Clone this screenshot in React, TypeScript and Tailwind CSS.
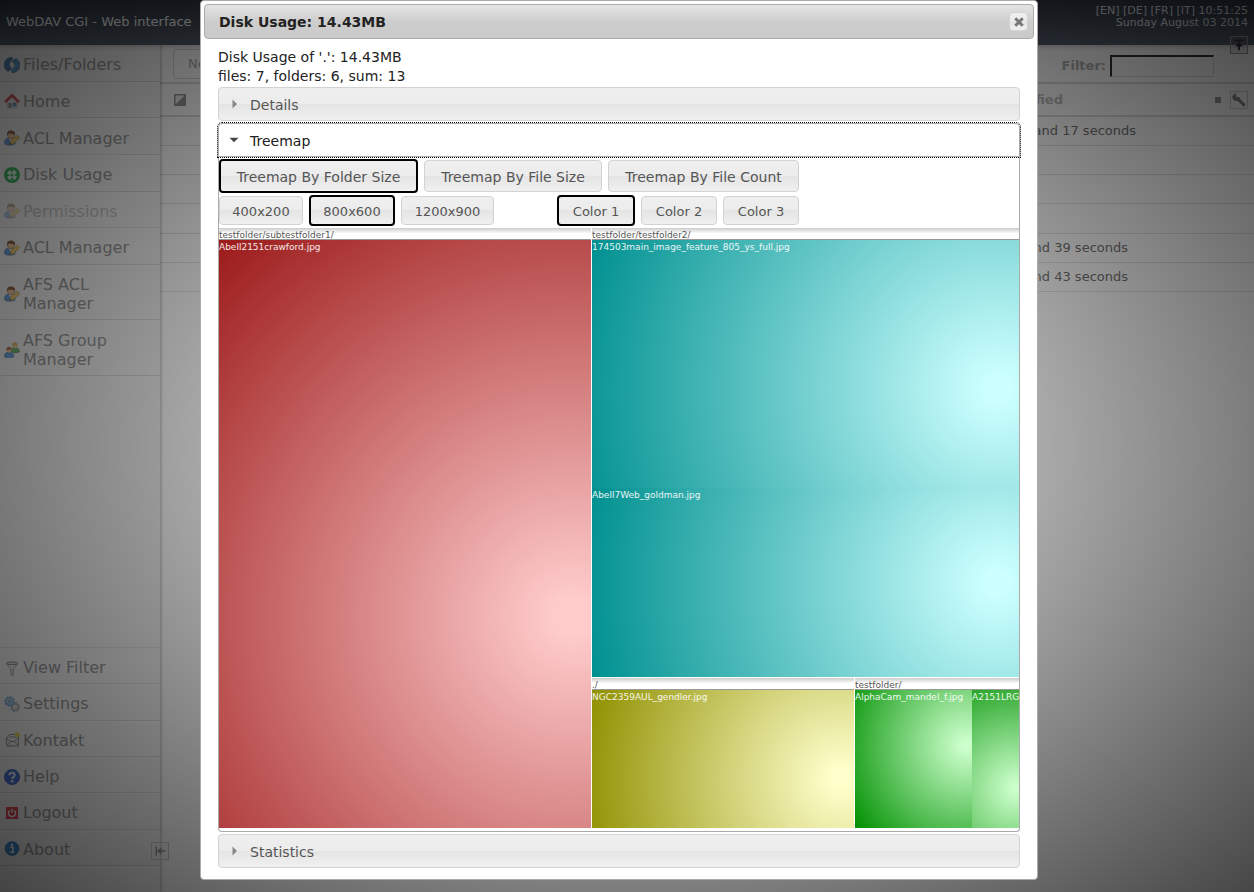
import type { ReactNode } from 'react';

function Svg({ children, className = 'size-4' }: { children: ReactNode; className?: string }) {
  return (
    <svg viewBox="0 0 16 16" className={`${className} shrink-0`} aria-hidden="true">
      {children}
    </svg>
  );
}

const FilesIcon = () => (
  <Svg>
    <path d="M8 .4C3.500.4.300 3.600.300 7.600c0 3 1.400 5.500 3.700 6.900L8 11.500C5.600 10 5 8 6.200 5.800L8.800 2.500z" fill="#3d78b4" stroke="#2b5a8c" strokeWidth=".7" />
    <path d="M8 15.600c4.500 0 7.700-3.200 7.700-7.200 0-3-1.400-5.500-3.700-6.900L8 4.500c2.400 1.500 3 3.500 1.800 5.700l-2.600 3.300z" fill="#4f92cc" stroke="#2b5a8c" strokeWidth=".7" />
    <path d="M10.500 1.200L6.500 5.500c-1.200 2.600.2 3.900 1.700 5.400" fill="none" stroke="#d4e2ee" strokeWidth=".8" />
    <path d="M5.500 14.800l4.200-4.300c1.200-2.600-.2-3.900-1.700-5.400" fill="none" stroke="#d4e2ee" strokeWidth=".8" />
  </Svg>
);

const HomeIcon = () => (
  <Svg>
    <path d="M3 8l5-5 5 5v7H3z" fill="#ececec" stroke="#aaa" strokeWidth=".6" />
    <path d="M8 .8L.4 8.200l1.600 1.500L8 4l6 5.700 1.600-1.500z" fill="#e0484c" stroke="#b02a30" strokeWidth=".6" />
    <path d="M4.500 10h3v5h-3z" fill="#8a8a8a" />
    <path d="M9 10h3v3H9z" fill="#6c9cd4" stroke="#567" strokeWidth=".5" />
  </Svg>
);

const UserEditIcon = () => (
  <Svg>
    <path d="M.8 14c-.8-4 1.200-6 4.700-6s6 2 5.500 6c-3 1.600-7.200 1.600-10.200 0z" fill="#5b9be0" stroke="#3568a8" strokeWidth=".6" />
    <path d="M4.500 8.500L7 12l2.500-3.500z" fill="#f4f4f4" />
    <circle cx="7" cy="5.200" r="3.500" fill="#f2c69a" stroke="#a06a38" strokeWidth=".5" />
    <path d="M3 5.800C2.500 1.500 4.800.4 7 .4c2.700 0 4.600 1.500 4 4.800C9.500 3.500 7.500 4 5.500 3.500 4.500 3.700 3.800 4.700 3 5.800z" fill="#84502c" />
    <path d="M5.500 14.500l1.200-3.600 6.600-5.600 2.400 2.400-6.200 6z" fill="#f5cf64" stroke="#b0852c" strokeWidth=".6" />
    <path d="M5.500 14.500l.6-1.900 1.300 1.300z" fill="#555" />
  </Svg>
);

const DiskIcon = () => (
  <Svg>
    <circle cx="8" cy="8" r="8" fill="#23b14d" />
    <circle cx="8" cy="8" r="5.200" fill="#e5f5e8" />
    <circle cx="8" cy="8" r="1.500" fill="#23b14d" />
    <path d="M8 6L6 3h3zM10 8l3-2v3.500zM8 10l2 3H6.500zM6 8l-3 2V6.500z" fill="#23b14d" />
  </Svg>
);

const GroupIcon = () => (
  <Svg>
    <path d="M7 9.500c0-3 1.500-4 4-4s4.500 1.500 4.300 4.500c-2 1.200-6 1.200-8.300-.5z" fill="#5fb45f" stroke="#3c843c" strokeWidth=".6" />
    <circle cx="10.700" cy="3.500" r="2.600" fill="#f2c69a" />
    <path d="M8 3.500C8 1 9.500.3 10.800.3S13.800 1 13.500 4c-1-1.500-3.500-1-5.500-.5z" fill="#d9b04a" />
    <path d="M.5 15c-.3-3.500 1.500-5 4.500-5s5 1.500 4.700 5c-2.500 1-6.500 1-9.200 0z" fill="#5b9be0" stroke="#3568a8" strokeWidth=".6" />
    <circle cx="5" cy="8" r="2.700" fill="#f2c69a" />
    <path d="M2.300 8C2.300 5.500 3.600 4.800 5 4.800s3 .8 2.700 3.700C6.700 7 4.500 7.500 2.300 8z" fill="#a0603c" />
  </Svg>
);

const FunnelIcon = () => (
  <Svg>
    <path d="M2.500 4L7 8.800v5.700l2.300.8V8.800L13.700 4" fill="#efefef" stroke="#9a9a9a" />
    <ellipse cx="8.100" cy="3.300" rx="5.600" ry="1.400" fill="#e0e0e0" stroke="#808080" />
  </Svg>
);

const GearsIcon = () => (
  <Svg>
    <circle cx="11" cy="11" r="3.200" fill="#e2e5e8" stroke="#b4bac0" strokeWidth="2" />
    <circle cx="11" cy="11" r="4.500" fill="none" stroke="#9ba2aa" strokeWidth="1.200" strokeDasharray="1.800 1.700" />
    <circle cx="5.500" cy="5.500" r="3.400" fill="#dbe9f6" stroke="#8dbbe6" strokeWidth="2.400" />
    <circle cx="5.500" cy="5.500" r="4.800" fill="none" stroke="#6a9cd0" strokeWidth="1.200" strokeDasharray="1.900 1.800" />
    <circle cx="5.500" cy="5.500" r="1.500" fill="#6a9cd0" />
  </Svg>
);

const MailIcon = () => (
  <Svg>
    <path d="M2.500 14V6l3-3.500h9V14z" fill="#f2f2f2" stroke="#8c8c8c" />
    <path d="M3 13.500l4-4h3l4 4M3 7l4 3M14 6l-4 4M5 5.500c3-1 5-1 7 0" fill="none" stroke="#8c8c8c" />
    <circle cx="13.300" cy="2.800" r="2.500" fill="#e8dc3c" />
  </Svg>
);

const HelpIcon = () => (
  <Svg>
    <circle cx="8" cy="8" r="7.600" fill="#2f62d8" stroke="#2048a8" strokeWidth=".8" />
    <path d="M5.400 6.200C5.400 2.800 10.800 2.800 10.700 6c-.1 2-2.500 2-2.600 4" fill="none" stroke="#fff" strokeWidth="1.900" />
    <circle cx="8.100" cy="12.200" r="1.200" fill="#fff" />
  </Svg>
);

const LogoutIcon = () => (
  <Svg>
    <path d="M2 2h12v12H2z" fill="#e02838" />
    <path d="M5.600 5.600a3.500 3.500 0 1 0 4.800 0M8 3.800v4" fill="none" stroke="#fff" strokeWidth="1.500" />
  </Svg>
);

const InfoIcon = () => (
  <Svg>
    <circle cx="8" cy="7.600" r="7" fill="#1d7ed0" stroke="#125a9c" strokeWidth=".6" />
    <path d="M6.200 6.300h2.700v4.900M6 11.300h4.300" fill="none" stroke="#fff" strokeWidth="1.500" />
    <circle cx="8" cy="3.800" r="1.200" fill="#fff" />
  </Svg>
);

type NavEntry = { label: string; icon: ReactNode; faded?: boolean };

const topNav: NavEntry[] = [
  { label: 'Files/Folders', icon: <FilesIcon /> },
  { label: 'Home', icon: <HomeIcon /> },
  { label: 'ACL Manager', icon: <UserEditIcon /> },
  { label: 'Disk Usage', icon: <DiskIcon /> },
  { label: 'Permissions', icon: <UserEditIcon />, faded: true },
  { label: 'ACL Manager', icon: <UserEditIcon /> },
  { label: 'AFS ACL Manager', icon: <UserEditIcon /> },
  { label: 'AFS Group Manager', icon: <GroupIcon /> },
];

const bottomNav: NavEntry[] = [
  { label: 'View Filter', icon: <FunnelIcon /> },
  { label: 'Settings', icon: <GearsIcon /> },
  { label: 'Kontakt', icon: <MailIcon /> },
  { label: 'Help', icon: <HelpIcon /> },
  { label: 'Logout', icon: <LogoutIcon /> },
  { label: 'About', icon: <InfoIcon /> },
];

function NavList({ items, className }: { items: NavEntry[]; className: string }) {
  return (
    <ul className={`flex flex-col ${className}`}>
      {items.map((item, i) => (
        <li key={i} className="flex grow border-b border-[#dcdcdc] shadow-[0_1px_0_#fbfbfb]">
          <a
            href="#"
            className={`flex grow items-center gap-[3px] pt-[10px] pr-6 pb-[6px] pl-1 text-base leading-[19px] text-[#9a9a9a] ${
              item.faded ? 'opacity-50' : ''
            }`}
          >
            <span className="opacity-85">{item.icon}</span>
            <span>{item.label}</span>
          </a>
        </li>
      ))}
    </ul>
  );
}

const rows = ['and 17 seconds', '', '', '', 'and 39 seconds', 'and 43 seconds'];

function IconButton({ label, children, className }: { label: string; children: ReactNode; className: string }) {
  return (
    <button
      type="button"
      aria-label={label}
      className={`flex size-[18px] items-center justify-center border border-[#d0d0d0] ${className}`}
    >
      {children}
    </button>
  );
}

function Page() {
  return (
    <div className="flex min-h-screen flex-col bg-white">
      <header className="relative z-10 flex h-[45px] items-start justify-between bg-linear-to-b from-[#303a47] to-[#56606e] px-[6px] shadow-[0_1px_5px_#00000044]">
        <h1 className="pt-[14px] text-[13px] leading-4 text-white">WebDAV CGI - Web interface</h1>
        <div className="pt-[5px] text-right text-[11px] leading-3 text-[#e2e5ea]">
          <div>
            <a href="#">[EN]</a> <a href="#">[DE]</a> <a href="#">[FR]</a> <a href="#">[IT]</a> 10:51:25
          </div>
          <div>Sunday August 03 2014</div>
        </div>
        <button
          type="button"
          aria-label="Collapse header"
          className="absolute right-[6px] -bottom-[9px] flex size-[18px] items-center justify-center border border-[#9a9a9a] bg-[#88888833]"
        >
          <Svg className="size-3">
            <path d="M2 2h12M8 15V6" stroke="#333" strokeWidth="2.500" />
            <path d="M3 10l5-6 5 6z" fill="#333" />
          </Svg>
        </button>
      </header>

      <div className="flex grow">
        <nav className="relative flex w-40 shrink-0 flex-col justify-between bg-[#f6f6f6] pb-[26px] shadow-[1px_0_3px_#00000044]">
          <NavList items={topNav} className="h-[331px]" />
          <NavList items={bottomNav} className="h-[219px] border-t border-[#e4e4e4]" />
          <IconButton label="Collapse sidebar" className="absolute -right-[9px] bottom-[32px] bg-[#f0f0f04d]">
            <Svg className="size-3">
              <path d="M3 2v12M15 8H7" stroke="#999" strokeWidth="2" />
              <path d="M10 3L4 8l6 5z" fill="#999" />
            </Svg>
          </IconButton>
        </nav>

        <main className="min-w-0 grow">
          <div className="flex h-[39px] items-center justify-between border-b-2 border-[#dcdcdc] pr-10 pl-[13px]">
            <button type="button" className="h-[30px] rounded border border-[#d6d6d6] px-[14px] text-[13px] text-[#aaaaaa]">
              New
            </button>
            <label className="flex items-center gap-1 pt-1 text-[13px] font-bold text-[#b0b0b0]">
              Filter:
              <input
                type="text"
                className="h-[22px] w-[104px] border-t-2 border-r border-b border-l-2 border-t-[#333333] border-r-[#dddddd] border-b-[#dddddd] border-l-[#333333] bg-transparent px-1"
              />
            </label>
          </div>
          <table className="h-[208px] w-full text-[13px]">
            <thead>
              <tr className="h-8 border-b-2 border-[#dcdcdc]">
                <th className="w-10 pl-[14px] text-left">
                  <Svg className="size-3">
                    <path d="M1 1h14v14H1z" fill="#f0f0f0" stroke="#999" strokeWidth="2" />
                    <path d="M15 1v14H1z" fill="#999" />
                  </Svg>
                </th>
                <th className="text-right font-bold text-[#bcbcbc]">Modified</th>
                <th className="w-[191px] pr-[6px]">
                  <div className="flex items-center justify-end gap-[9px]">
                    <span className="size-[6px] bg-[#999999]" />
                    <IconButton label="Columns" className="">
                      <Svg className="size-[14px]">
                        <path d="M6 6l7.500 7.500" stroke="#888" strokeWidth="3.500" strokeLinecap="round" />
                        <path d="M8.800 4.500a4.200 4.200 0 1 1-3.900-3.900L4.300 3.500l1.500 1.700z" fill="#888" />
                      </Svg>
                    </IconButton>
                  </div>
                </th>
              </tr>
            </thead>
            <tbody>
              {rows.map((text, i) => (
                <tr key={i} className="h-[29px] border-b border-[#e2e2e2]">
                  <td />
                  <td
                    colSpan={2}
                    className={`text-right text-[#757575] ${i === 0 ? 'pr-[118px]' : 'pr-[126px]'}`}
                  >
                    {text}
                  </td>
                </tr>
              ))}
            </tbody>
          </table>
        </main>
      </div>
    </div>
  );
}

const glass = 'bg-[linear-gradient(#efefef_0%,#ececec_50%,#e4e4e4_50%,#f0f0f0_100%)]';

function ToolButton({ children, active, className }: { children: ReactNode; active?: boolean; className: string }) {
  return (
    <button
      type="button"
      aria-pressed={!!active}
      className={`rounded pt-[2px] text-[#555555] ${glass} ${active ? 'border-2 border-black' : 'border border-[#d3d3d3]'} ${className}`}
    >
      {children}
    </button>
  );
}

function AccordionHeader({ title, open }: { title: string; open?: boolean }) {
  return (
    <h3>
      <button
        type="button"
        aria-expanded={!!open}
        className={`flex h-[34px] w-full items-center gap-[10px] border pl-[9px] text-left text-[14px] ${
          open
            ? 'rounded-t border-[#aaaaaa] bg-white text-[#212121] outline-1 outline-black outline-dotted'
            : `rounded border-[#d3d3d3] text-[#555555] ${glass}`
        }`}
      >
        <Svg className="size-3">
          {open ? <path d="M2 5h12l-6 6z" fill="#454545" /> : <path d="M6 2l6 6-6 6z" fill="#888888" />}
        </Svg>
        <span className="pt-[2px]">{title}</span>
      </button>
    </h3>
  );
}

function Folder({ path, children }: { path: string; children: ReactNode }) {
  return (
    <section className="flex min-w-0 flex-col overflow-hidden">
      <h4 className="h-3 shrink-0 border-b border-[#999999] bg-linear-to-b from-[#cccccc] to-white to-50% text-[9px] leading-[14px] text-[#555555]">
        {path}
      </h4>
      {children}
    </section>
  );
}

function Tile({ name, className }: { name: string; className: string }) {
  return (
    <div className={`overflow-hidden text-[9px] leading-[15px] whitespace-nowrap text-white/90 ${className}`}>{name}</div>
  );
}

function Treemap() {
  return (
    <div className="grid h-[600px] grid-cols-[372fr_427fr] gap-px">
      <Folder path="testfolder/subtestfolder1/">
        <Tile
          name="Abell2151crawford.jpg"
          className="grow bg-[radial-gradient(circle_farthest-corner_at_95%_64%,#ffcccc_3%,#9c1a1a)]"
        />
      </Folder>
      <div className="grid min-w-0 grid-rows-[449fr_150fr] gap-px">
        <Folder path="testfolder/testfolder2/">
          <Tile
            name="174503main_image_feature_805_ys_full.jpg"
            className="grow-[248] basis-0 bg-[radial-gradient(circle_farthest-corner_at_95%_60%,#ccffff_3%,#009090)]"
          />
          <Tile
            name="Abell7Web_goldman.jpg"
            className="grow-[189] basis-0 bg-[radial-gradient(circle_farthest-corner_at_95%_50%,#ccffff_3%,#009090)]"
          />
        </Folder>
        <div className="grid min-w-0 grid-cols-[262fr_164fr] gap-px">
          <Folder path="./">
            <Tile
              name="NGC2359AUL_gendler.jpg"
              className="grow bg-[radial-gradient(circle_farthest-corner_at_95%_64%,#ffffcc_3%,#909000)]"
            />
          </Folder>
          <Folder path="testfolder/">
            <div className="grid grow grid-cols-[117fr_47fr]">
              <Tile
                name="AlphaCam_mandel_f.jpg"
                className="bg-[radial-gradient(circle_farthest-corner_at_95%_40%,#ccffcc_3%,#009000)]"
              />
              <Tile
                name="A2151LRG"
                className="bg-[radial-gradient(circle_farthest-corner_at_95%_71%,#ccffcc_3%,#28a528)]"
              />
            </div>
          </Folder>
        </div>
      </div>
    </div>
  );
}

function DiskUsageDialog() {
  return (
    <div
      role="dialog"
      aria-labelledby="dialog-title"
      className="w-[838px] max-w-full rounded border border-[#aaaaaa] bg-white p-[3px] text-[14px] text-[#222222]"
    >
      <div className="flex h-[35px] items-center justify-between rounded border border-[#aaaaaa] bg-[linear-gradient(#e4e4e4_0%,#cdcdcd_50%,#cacaca_100%)] pr-[5px] pl-[14px]">
        <h2 id="dialog-title" className="pt-[2px] font-bold">
          Disk Usage: 14.43MB
        </h2>
        <button
          type="button"
          aria-label="Close"
          className={`flex size-[19px] items-center justify-center rounded border border-[#d3d3d3] ${glass}`}
        >
          <Svg className="size-3">
            <path d="M3 3l10 10M13 3L3 13" stroke="#777777" strokeWidth="4" />
          </Svg>
        </button>
      </div>
      <div className="px-[14px] pt-[9px] pb-2">
        <p className="leading-[19px]">
          Disk Usage of '.': 14.43MB
          <br />
          files: 7, folders: 6, sum: 13
        </p>
        <div className="mt-px flex flex-col gap-[2px]">
          <AccordionHeader title="Details" />
          <div>
            <AccordionHeader title="Treemap" open />
            <div className="rounded-b border border-t-0 border-[#aaaaaa] pt-[2px] pb-[3px]">
              <div className="flex h-[34px] items-center gap-[6px]">
                <ToolButton active className="h-[34px] w-[199px]">Treemap By Folder Size</ToolButton>
                <ToolButton className="h-8 w-[178px]">Treemap By File Size</ToolButton>
                <ToolButton className="h-8 w-[191px]">Treemap By File Count</ToolButton>
              </div>
              <div className="my-[2px] flex h-[31px] items-center gap-[63px] text-[13px]">
                <div className="flex items-center gap-[6px]">
                  <ToolButton className="h-[29px] w-[84px]">400x200</ToolButton>
                  <ToolButton active className="h-[31px] w-[86px]">800x600</ToolButton>
                  <ToolButton className="h-[29px] w-[93px]">1200x900</ToolButton>
                </div>
                <div className="flex items-center gap-[6px]">
                  <ToolButton active className="h-[31px] w-[78px]">Color 1</ToolButton>
                  <ToolButton className="h-[29px] w-[76px]">Color 2</ToolButton>
                  <ToolButton className="h-[29px] w-[76px]">Color 3</ToolButton>
                </div>
              </div>
              <Treemap />
            </div>
          </div>
          <AccordionHeader title="Statistics" />
        </div>
      </div>
    </div>
  );
}

export default function App() {
  return (
    <div className="relative font-['DejaVu_Sans',Verdana,sans-serif]">
      <Page />
      <div className="absolute inset-0 z-20 flex items-start justify-center bg-[radial-gradient(ellipse_farthest-corner_at_center,#00000000,#000000b8)] pr-4">
        <DiskUsageDialog />
      </div>
    </div>
  );
}
